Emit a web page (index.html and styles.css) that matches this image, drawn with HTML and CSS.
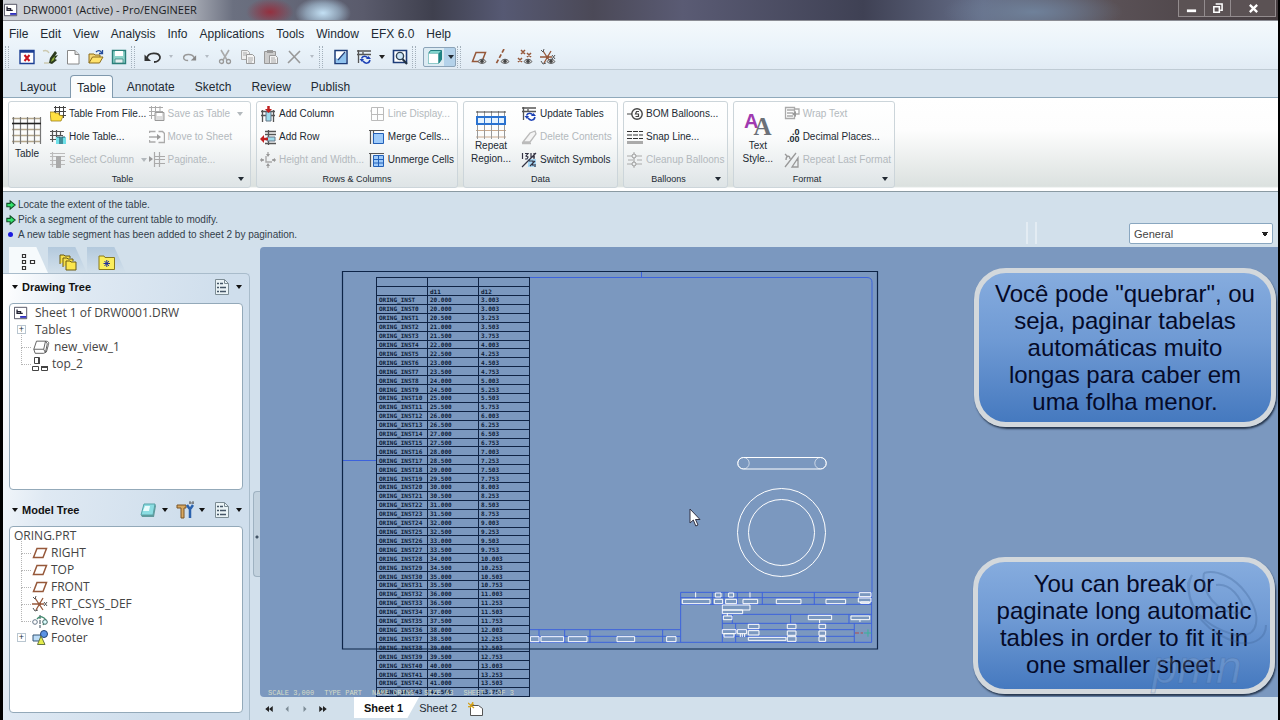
FILE: index.html
```html
<!DOCTYPE html>
<html lang="en">
<head>
<meta charset="utf-8">
<title>DRW0001 (Active) - Pro/ENGINEER</title>
<link rel="stylesheet" href="styles.css">
</head>
<body>
<svg class="defs" aria-hidden="true">
  <defs>
    <symbol id="i-doc" viewBox="0 0 16 16"><path d="M.5 1.500h14v13H.5z" fill="#fff" stroke="#445"/><path d="M3.500 4v4.500h4V6.500H3.500M7.500 8.500H10" fill="none" stroke="#223" stroke-width="1.500"/><path d="M7 12.500h7" stroke="#22b" stroke-width="2"/></symbol>
    <symbol id="i-closewin" viewBox="0 0 16 16"><path d="M1 1.500h14v13H1z" fill="#fff" stroke="#1c3f94" stroke-width="1.400"/><path d="M1 2.500h14" stroke="#1c3f94" stroke-width="2.500"/><path d="M5.500 6l5 6M10.500 6l-5 6" stroke="#c8141e" stroke-width="2"/></symbol>
    <symbol id="i-erase" viewBox="0 0 16 16"><path d="M1 2c3-1 5 0 6 2M2 14h5" fill="none" stroke="#ccc9b0" stroke-width="1.500"/><path d="M8 9l5-7 2 2-2 3 3-1-3 4 2 1-5 4-3-1z" fill="#2b3a1e"/><path d="M10 10l3-3-1 4-3 2z" fill="#8fae3a"/></symbol>
    <symbol id="i-new" viewBox="0 0 16 16"><path d="M2.500 1.500h7.500l4 4v9.500H2.500z" fill="#fff" stroke="#888"/><path d="M10 1.500v4h4" fill="#ddd" stroke="#888"/></symbol>
    <symbol id="i-open" viewBox="0 0 16 16"><path d="M1 14V5h5l1 1h5v3" fill="#f4d676" stroke="#8c6d1c"/><path d="M1 14l3.500-6H15l-3.500 6z" fill="#ffe26b" stroke="#8c6d1c"/><path d="M8 3c2-2 4-2 6 1M14.500 1v3.500H11" fill="none" stroke="#234a9c" stroke-width="1.300"/></symbol>
    <symbol id="i-save" viewBox="0 0 16 16"><path d="M1.500 1.500h13v13h-13z" fill="#8ed2ca" stroke="#2b7f7a" stroke-width="1.400"/><path d="M4 2h8v5H4z" fill="#fff"/><path d="M4 10h8v4H4z" fill="#e5efef" stroke="#2b7f7a" stroke-width=".7"/></symbol>
    <symbol id="i-undo" viewBox="0 0 18 16"><path d="M3 9C4 3 15 3 16 8c.5 3-3 5-6 5" fill="none" stroke="#333" stroke-width="1.800"/><path d="M.5 5.500V12H7z" fill="#333"/></symbol>
    <symbol id="i-redo" viewBox="0 0 18 16"><path d="M15 9C13 4 4 4 3 8c-.5 3 2 4 5 4" fill="none" stroke="#999" stroke-width="1.600"/><path d="M17 6v6h-6z" fill="#888"/></symbol>
    <symbol id="i-cut" viewBox="0 0 16 16"><path d="M4 1l6 10M12 1L6 11" stroke="#aaa" stroke-width="1.600"/><circle cx="4.500" cy="12.500" r="2" fill="none" stroke="#999" stroke-width="1.300"/><circle cx="11.500" cy="12.500" r="2" fill="none" stroke="#999" stroke-width="1.300"/></symbol>
    <symbol id="i-copy" viewBox="0 0 16 16"><path d="M1.500 1.500h6l2 2v7h-8z" fill="#eee" stroke="#aaa"/><path d="M6.500 5.500h6l2 2v7h-8z" fill="#f3f3f3" stroke="#999"/><path d="M3 4h4M3 6h3M8 9h5M8 11h5M8 13h4" stroke="#aaa"/></symbol>
    <symbol id="i-paste" viewBox="0 0 16 16"><path d="M1.500 2.500h11v12h-11z" fill="#ccc" stroke="#999"/><path d="M4 1h6v3H4z" fill="#999"/><path d="M6.500 6.500h6l2 2v6h-8z" fill="#f3f3f3" stroke="#999"/><path d="M8 9h4M8 11h5M8 13h5" stroke="#aaa"/></symbol>
    <symbol id="i-x" viewBox="0 0 16 16"><path d="M3 2l11 12M14 2L2 14" stroke="#999" stroke-width="1.600"/></symbol>
    <symbol id="i-sheet" viewBox="0 0 16 16"><path d="M2 1.500h12v13H2z" fill="#fff" stroke="#1d3c78" stroke-width="1.500"/><path d="M3 14V9c3 3 5-1 10-6v11z" fill="#8fc2ee"/><path d="M5 11l7-8" stroke="#1d3c78" stroke-width="1.200"/></symbol>
    <symbol id="i-update" viewBox="0 0 16 16"><path d="M1 2h14M1 5.500h14M2.500 1v13M7 3v3" fill="none" stroke="#555" stroke-width="1.300"/><path d="M5.500 9.500c1-3 5-3 6.500 0M14 11c-1 4-5 4-7 1" fill="none" stroke="#1a3fb5" stroke-width="1.500"/><path d="M10 10h5l-2.500-3zM3.500 10h4.500L6 13z" fill="#1a3fb5"/></symbol>
    <symbol id="i-zoom" viewBox="0 0 16 16"><path d="M1.500 1.500h13v12h-13z" fill="#fff" stroke="#1d3c78" stroke-width="1.600"/><circle cx="8" cy="7" r="3.600" fill="#cfe8fa" stroke="#345" stroke-width="1.400"/><path d="M10.500 10l4.500 5" stroke="#234" stroke-width="2"/></symbol>
    <symbol id="i-cube" viewBox="0 0 16 16"><path d="M1.500 4.500l2-3h11v9l-3 4h-10z" fill="#7fd3cc" stroke="#247f80"/><path d="M1.500 4.500h10v10h-10z" fill="#fff" stroke="#8fc9c9"/><path d="M11.500 4.500l3-3v9l-3 4z" fill="#1f8484"/></symbol>
    <symbol id="i-plane" viewBox="0 0 16 16"><path d="M5 3.500h9.500L11 12.500H1.500z" fill="none" stroke="#96583a" stroke-width="1.500"/></symbol>
    <symbol id="i-eye" viewBox="0 0 16 16"><path d="M7 12.500c2-3 6-3 8 0-2 2.500-6 2.500-8 0z" fill="#ddd" stroke="#555"/><circle cx="11" cy="12.300" r="1.700" fill="#444"/></symbol>
    <symbol id="i-axis" viewBox="0 0 16 16"><path d="M10 0L2 15" stroke="#96583a" stroke-width="1.700" stroke-dasharray="4 2"/></symbol>
    <symbol id="i-points" viewBox="0 0 16 16"><path d="M4 1l4 4M8 1L4 5M10 4l4 4M14 4l-4 4M1 9l4 4M5 9l-4 4" stroke="#96583a" stroke-width="1.500"/></symbol>
    <symbol id="i-csys" viewBox="0 0 16 16"><path d="M0 8h12M3 2l8 12M11 2L4 14" stroke="#96583a" stroke-width="1.300"/><path d="M12 6l3 4M15 6l-3 4M1 1l2 2 1-3M1 12l2 3 3-1" fill="none" stroke="#555"/><circle cx="7.500" cy="8" r="1.600" fill="#96583a"/></symbol>
    <symbol id="i-grid" viewBox="0 0 30 28"><path d="M0 1.500h29M0 12.500h29M0 18.500h29M0 24.500h29" stroke="#b3a68c" stroke-width="1.300"/><path d="M1.500 0v27M8.500 0v27M15.500 0v27M22.500 0v27M28.500 0v27" stroke="#777" stroke-width="1.200"/><path d="M0 6.500h29" stroke="#222" stroke-width="1.600"/></symbol>
    <symbol id="i-tfile" viewBox="0 0 16 16"><path d="M4 1.500h12M4 5.500h12M4 9.500h12M5.500 0v12M9.500 0v12M13.500 0v12" stroke="#444"/><path d="M0 6h4l1 1h4v2l4 1-2 5H1z" fill="#ffe040" stroke="#9c821c" stroke-width=".8"/></symbol>
    <symbol id="i-thole" viewBox="0 0 16 16"><path d="M0 2.500h14M0 6.500h13M0 10.500h7M2.500 1v12M6.500 1v10M10.500 2v4" stroke="#555" stroke-width="1.200"/><path d="M6 8h10v7H6z" fill="#6fe0e8"/><path d="M7 8h3v7M15 8h-3v7" fill="none" stroke="#256" stroke-width="1.200"/></symbol>
    <symbol id="i-tcol" viewBox="0 0 16 16"><path d="M0 1.500h15M0 4.500h15M0 8.500h15M0 12.500h15M2.500 0v15" stroke="#bbb" stroke-width="1.200"/><path d="M6 4h5v12H6z" fill="#aaa"/></symbol>
    <symbol id="i-tsave" viewBox="0 0 16 16"><path d="M0 1.500h14M0 5.500h14M0 9.500h6M2.500 0v13M6.500 0v6M11 0v6" stroke="#aaa"/><path d="M6 6.500h9v8H6z" fill="#ddd" stroke="#999"/><path d="M8 7h5v3H8z" fill="#fff"/></symbol>
    <symbol id="i-move" viewBox="0 0 16 16"><path d="M.5 4v-1.500h6M.5 11v2h6M9.500 2.500h4l2 2v9h-6M0 8h10" fill="none" stroke="#aaa" stroke-width="1.400"/><path d="M8 5l4 3-4 3z" fill="#999"/></symbol>
    <symbol id="i-pag" viewBox="0 0 16 16"><path d="M5.500 0v15M10.500 0v15M5 4.500h11M5 7.500h11M5 11.500h11" stroke="#aaa" stroke-width="1.200"/><path d="M0 4l4 3-4 3z" fill="#999"/></symbol>
    <symbol id="i-acol" viewBox="0 0 16 16"><path d="M1 5.500h14M1 9.500h14M2.500 4v12M13.500 4v12" stroke="#555" stroke-width="1.300"/><path d="M6 6h5v9H6z" fill="#9fdcec" stroke="#678"/><path d="M8.500 0v6" stroke="#c02020" stroke-width="2.500"/><path d="M5 3h7L8.500 7z" fill="#c02020"/></symbol>
    <symbol id="i-arow" viewBox="0 0 16 16"><path d="M5 2.500h11M5 5.500h11M5 14.500h11M8.500 1v15" stroke="#555" stroke-width="1.300"/><path d="M7 8h8v4H7z" fill="#9fdcec" stroke="#678"/><path d="M2 10h6" stroke="#c02020" stroke-width="2.500"/><path d="M4 6v8L0 10z" fill="#c02020"/></symbol>
    <symbol id="i-hw" viewBox="0 0 16 16"><path d="M6 4v6h6M0 8h4M12 8h4M8 0v4M8 12v4" fill="none" stroke="#aaa" stroke-width="1.400"/><path d="M1 6v4l3-2zM15 6v4l-3-2zM6 2h4L8 5zM6 14h4l-2-3z" fill="#999"/></symbol>
    <symbol id="i-line" viewBox="0 0 16 16"><path d="M2.500 1.500h12v13h-12zM8.500 2v12M2 8.500h12M1 5h2" fill="none" stroke="#bbb"/></symbol>
    <symbol id="i-merge" viewBox="0 0 16 16"><path d="M0 1.500h15M1.500 1v14M4.500 1v14" stroke="#555" stroke-width="1.200"/><path d="M4.500 4.500h10v10h-10z" fill="#9fcbfa" stroke="#2260b8"/></symbol>
    <symbol id="i-unmerge" viewBox="0 0 16 16"><path d="M0 1.500h15M1.500 1v14" stroke="#555" stroke-width="1.200"/><path d="M4.500 3.500h10v11h-10z" fill="#9fcbfa" stroke="#2260b8"/><path d="M9.500 4v10M5 7.500h10M5 11h10" stroke="#2260b8"/></symbol>
    <symbol id="i-repeat" viewBox="0 0 30 28"><path d="M0 19.500h30M0 26h30" stroke="#c9a98c"/><path d="M1.500 0v28M8.500 0v28M15.500 0v28M22.500 0v28M28.500 0v28" stroke="#999"/><path d="M0 1h30" stroke="#444"/><path d="M1 6h28v7H1z" fill="#e5f3ff" stroke="#2a72d0" stroke-width="2"/><path d="M8.500 6v7M15.500 6v7M22.500 6v7" stroke="#2a72d0"/></symbol>
    <symbol id="i-eraser" viewBox="0 0 16 16"><path d="M2 13l7-9 5-2 1 3-6 8zM1 14.500h9" fill="#f4f4f4" stroke="#bbb" stroke-width="1.300"/></symbol>
    <symbol id="i-switch" viewBox="0 0 16 16"><path d="M7 7h8v8H7z" fill="#a8d8f6"/><path d="M1.500 1v6M4 1.500h3L5 4l2 1-1 2H4M10 1v4h4M13 1v6M1 15L15 1M8 9h4v5M9 14l5-5M14 12v3" fill="none" stroke="#334" stroke-width="1.200"/></symbol>
    <symbol id="i-bom" viewBox="0 0 16 16"><circle cx="10" cy="8" r="5.200" fill="none" stroke="#444" stroke-width="1.400"/><path d="M0 8h5M12 5.500H9.500L8.500 8h3v2.500H8.500" fill="none" stroke="#444" stroke-width="1.200"/></symbol>
    <symbol id="i-snap" viewBox="0 0 16 16"><path d="M0 2.500h16M0 6h16M0 9.500h16" stroke="#333" stroke-width="1.200" stroke-dasharray="5 1"/><path d="M0 13.500h16" stroke="#aaa" stroke-width="3"/></symbol>
    <symbol id="i-clean" viewBox="0 0 16 16"><path d="M0 4h5M9 4h6M0 12h5M9 12h6M1 8h5M10 8h5M7 0v2M7 14v2" stroke="#aaa"/><circle cx="7" cy="4" r="2" fill="none" stroke="#999"/><circle cx="7" cy="12" r="2" fill="none" stroke="#999"/><path d="M7 6v4" stroke="#999"/></symbol>
    <symbol id="i-wrap" viewBox="0 0 16 16"><path d="M1.500 1.500h9v11h-9zM3 4h8M3 7h6M3 10h6M11 3h4v5h-4" fill="none" stroke="#aaa" stroke-width="1.300"/><path d="M12 5v6L8 8z" fill="#999"/></symbol>
    <symbol id="i-repfmt" viewBox="0 0 16 16"><path d="M1 15L12 1M1 2l3 3M2 8c0-5 4-5 4-1M8 15l6-9v9z" fill="none" stroke="#999" stroke-width="1.300"/></symbol>
    <symbol id="i-arrow" viewBox="0 0 12 12"><path d="M1 4h4V1l6 5-6 5V8H1z" fill="#31e36c" stroke="#124d28" stroke-width="1.300"/></symbol>
    <symbol id="i-nodes" viewBox="0 0 16 18"><path d="M2.500 1.500h3v3h-3zM2.500 7.500h3v3h-3zM2.500 13.500h3v3h-3zM10.500 7.500h4v3h-4z" fill="#fff" stroke="#333" stroke-width="1.200"/></symbol>
    <symbol id="i-folders" viewBox="0 0 18 18"><path d="M1 11V2h4l1 1h5v2" fill="#f7e04c" stroke="#6b5a12"/><path d="M4 14V5h4l1 1h5v2" fill="#f7e04c" stroke="#6b5a12"/><path d="M7 8h4l1 1h5v8H7z" fill="#fbe64e" stroke="#6b5a12"/></symbol>
    <symbol id="i-fav" viewBox="0 0 18 16"><path d="M1 2h5l1 1.500h9.500v12H1z" fill="#fbee5c" stroke="#8a7a1c"/><path d="M8.800 6v7M5.500 9.500h6.500M6.500 7l4.500 5M11 7l-4.500 5" stroke="#22309c"/></symbol>
    <symbol id="i-list" viewBox="0 0 16 18"><path d="M1.500 1.500h9l4 4v11h-13z" fill="#eaf3f6" stroke="#7c8c94"/><path d="M10.500 1.500v4h4" fill="none" stroke="#7c8c94"/><path d="M3 5.500h2M3 9.500h2M3 13.500h2M6 5.500h3M6 9.500h6M6 13.500h6" stroke="#456" stroke-width="1.500"/></symbol>
    <symbol id="i-layer" viewBox="0 0 18 16"><path d="M5 2h11l-2 11H2z" fill="#8cdde2" stroke="#56a3a8"/><path d="M16 2l1 2-2 11-1-2zM2 13l1 2h12l-1-2z" fill="#5f9a9c"/><path d="M6 4h5l-1 5H4z" fill="#e8fbfc"/></symbol>
    <symbol id="i-tools" viewBox="0 0 18 18"><path d="M1 4h9v3H8v10H5V7H1z" fill="#d8a860" stroke="#7b5526"/><path d="M11 4l2 3h2l2-3M14 7v10" fill="none" stroke="#2b62ae" stroke-width="2.500"/><path d="M13 2h5M14 0v3M17 0v3" stroke="#666"/></symbol>
    <symbol id="i-view" viewBox="0 0 20 16"><path d="M5 1.500h10l-2 9H2l3-9M15 1.500c4 0 4 2 3 5l-2 7-3 1.500H3.500L2 10.500M13 10.500l2 4M15 1.500l2 3-2 9" fill="#fff" stroke="#555"/></symbol>
    <symbol id="i-proj" viewBox="0 0 16 16"><path d="M2.500 1.500h5v6h-5zM.5 10.500h6v4h-6zM9.500 10.500h6v4h-6z" fill="#fff" stroke="#444"/><path d="M9 11h7M7 2v6" stroke="#444" stroke-width="2"/></symbol>
    <symbol id="i-rev" viewBox="0 0 16 16"><circle cx="3" cy="9" r="2.300" fill="none" stroke="#678"/><path d="M8 2v13" stroke="#345" stroke-dasharray="4 1"/><path d="M5 6c3-4 7-2 9 1l-3 5" fill="none" stroke="#3e8a6c" stroke-width="1.300"/><circle cx="13" cy="9" r="2.300" fill="#dff" stroke="#466"/></symbol>
    <symbol id="i-footer" viewBox="0 0 16 16"><path d="M1 5h8v6H1z" fill="#bcdcf7" stroke="#357"/><circle cx="12" cy="4" r="3.500" fill="#5b93e4" stroke="#247"/><path d="M9 6l4 8.500H5.500z" fill="#e4ec4c" stroke="#674"/></symbol>
    <symbol id="i-newsheet" viewBox="0 0 16 14"><path d="M2.500 3.500h8l4 3v7h-12z" fill="#fff" stroke="#555"/><path d="M0 1l6 5M5 0L2 6M0 5l6-3" stroke="#d3a018" stroke-width="1.300"/></symbol>
  </defs>
</svg>

<div class="app">
  <header class="titlebar">
    <svg class="ic"><use href="#i-doc"/></svg>
    <h1 class="title">DRW0001 (Active) - Pro/ENGINEER</h1>
    <div class="winbtns">
      <button type="button" class="winbtn" aria-label="Minimize"><svg viewBox="0 0 12 12"><path d="M1 8.500h10" stroke="#fff" stroke-width="3"/></svg></button>
      <button type="button" class="winbtn" aria-label="Restore"><svg viewBox="0 0 12 12"><path d="M4 1h7v7H9M2 4h6v6H2z" fill="none" stroke="#fff" stroke-width="1.700"/></svg></button>
      <button type="button" class="winbtn close" aria-label="Close"><svg viewBox="0 0 12 12"><path d="M2 2l8 8M10 2l-8 8" stroke="#fff" stroke-width="2.500"/></svg></button>
    </div>
  </header>

  <div class="bars">
    <nav class="menubar">
      <button type="button">File</button><button type="button">Edit</button><button type="button">View</button><button type="button">Analysis</button><button type="button">Info</button><button type="button">Applications</button><button type="button">Tools</button><button type="button">Window</button><button type="button">EFX 6.0</button><button type="button">Help</button>
    </nav>
    <div class="toolbar">
      <span class="grip"></span>
      <button type="button" class="tool" aria-label="Close window"><svg class="ic"><use href="#i-closewin"/></svg></button>
      <button type="button" class="tool" aria-label="Erase"><svg class="ic"><use href="#i-erase"/></svg></button>
      <button type="button" class="tool" aria-label="New"><svg class="ic"><use href="#i-new"/></svg></button>
      <button type="button" class="tool" aria-label="Open"><svg class="ic"><use href="#i-open"/></svg></button>
      <button type="button" class="tool" aria-label="Save"><svg class="ic"><use href="#i-save"/></svg></button>
      <span class="grip"></span>
      <button type="button" class="tool" aria-label="Undo"><svg class="ic wide"><use href="#i-undo"/></svg></button>
      <button type="button" class="drop dim" aria-label="Undo list"></button>
      <button type="button" class="tool" aria-label="Redo"><svg class="ic"><use href="#i-redo"/></svg></button>
      <button type="button" class="drop dim" aria-label="Redo list"></button>
      <button type="button" class="tool" aria-label="Cut"><svg class="ic"><use href="#i-cut"/></svg></button>
      <button type="button" class="tool" aria-label="Copy"><svg class="ic"><use href="#i-copy"/></svg></button>
      <button type="button" class="tool" aria-label="Paste"><svg class="ic"><use href="#i-paste"/></svg></button>
      <button type="button" class="tool" aria-label="Delete"><svg class="ic"><use href="#i-x"/></svg></button>
      <button type="button" class="drop dim" aria-label="Delete options"></button>
      <span class="grip"></span>
      <button type="button" class="tool" aria-label="Sheet setup"><svg class="ic"><use href="#i-sheet"/></svg></button>
      <button type="button" class="tool" aria-label="Update"><svg class="ic"><use href="#i-update"/></svg></button>
      <button type="button" class="drop" aria-label="Update options"></button>
      <button type="button" class="tool" aria-label="Refit"><svg class="ic"><use href="#i-zoom"/></svg></button>
      <span class="grip"></span>
      <button type="button" class="viewbtn" aria-label="Display style"><svg class="ic"><use href="#i-cube"/></svg><span class="caret"></span></button>
      <span class="grip"></span>
      <button type="button" class="tool" aria-label="Planes"><svg class="ic"><use href="#i-plane"/><use href="#i-eye"/></svg></button>
      <button type="button" class="tool" aria-label="Axes"><svg class="ic"><use href="#i-axis"/><use href="#i-eye"/></svg></button>
      <button type="button" class="tool" aria-label="Points"><svg class="ic"><use href="#i-points"/><use href="#i-eye"/></svg></button>
      <button type="button" class="tool" aria-label="Coordinate systems"><svg class="ic"><use href="#i-csys"/><use href="#i-eye"/></svg></button>
    </div>
  </div>

  <nav class="tabs">
    <button type="button">Layout</button><button type="button" class="active">Table</button><button type="button">Annotate</button><button type="button">Sketch</button><button type="button">Review</button><button type="button">Publish</button>
  </nav>

  <div class="ribbon">
    <section class="group g-table">
      <div class="cmds">
        <button type="button" class="big"><svg class="bigic"><use href="#i-grid"/></svg><span>Table</span></button>
        <div class="col">
          <button type="button"><svg class="ic"><use href="#i-tfile"/></svg>Table From File...</button>
          <button type="button"><svg class="ic"><use href="#i-thole"/></svg>Hole Table...</button>
          <button type="button" disabled><svg class="ic"><use href="#i-tcol"/></svg>Select Column<span class="caret"></span></button>
        </div>
        <div class="col">
          <button type="button" disabled><svg class="ic"><use href="#i-tsave"/></svg>Save as Table<span class="caret"></span></button>
          <button type="button" disabled><svg class="ic"><use href="#i-move"/></svg>Move to Sheet</button>
          <button type="button" disabled><svg class="ic"><use href="#i-pag"/></svg>Paginate...</button>
        </div>
      </div>
      <h2 class="more">Table<span class="caret end"></span></h2>
    </section>
    <section class="group g-rows">
      <div class="cmds">
        <div class="col">
          <button type="button"><svg class="ic"><use href="#i-acol"/></svg>Add Column</button>
          <button type="button"><svg class="ic"><use href="#i-arow"/></svg>Add Row</button>
          <button type="button" disabled><svg class="ic"><use href="#i-hw"/></svg>Height and Width...</button>
        </div>
        <div class="col">
          <button type="button" disabled><svg class="ic"><use href="#i-line"/></svg>Line Display...</button>
          <button type="button"><svg class="ic"><use href="#i-merge"/></svg>Merge Cells...</button>
          <button type="button"><svg class="ic"><use href="#i-unmerge"/></svg>Unmerge Cells</button>
        </div>
      </div>
      <h2>Rows &amp; Columns</h2>
    </section>
    <section class="group g-data">
      <div class="cmds">
        <button type="button" class="big two"><svg class="bigic"><use href="#i-repeat"/></svg><span>Repeat</span><span>Region...</span></button>
        <div class="col">
          <button type="button"><svg class="ic"><use href="#i-update"/></svg>Update Tables</button>
          <button type="button" disabled><svg class="ic"><use href="#i-eraser"/></svg>Delete Contents</button>
          <button type="button"><svg class="ic"><use href="#i-switch"/></svg>Switch Symbols</button>
        </div>
      </div>
      <h2>Data</h2>
    </section>
    <section class="group g-ball">
      <div class="cmds">
        <div class="col">
          <button type="button"><svg class="ic"><use href="#i-bom"/></svg>BOM Balloons...</button>
          <button type="button"><svg class="ic"><use href="#i-snap"/></svg>Snap Line...</button>
          <button type="button" disabled><svg class="ic"><use href="#i-clean"/></svg>Cleanup Balloons</button>
        </div>
      </div>
      <h2 class="more">Balloons<span class="caret end"></span></h2>
    </section>
    <section class="group g-fmt">
      <div class="cmds">
        <button type="button" class="big two"><span class="aa" aria-hidden="true"><b class="a1">A</b><b class="a2">A</b></span><span>Text</span><span>Style...</span></button>
        <div class="col">
          <button type="button" disabled><svg class="ic"><use href="#i-wrap"/></svg>Wrap Text</button>
          <button type="button"><span class="ic dec" aria-hidden="true"><i>.0</i><i>.00</i></span>Decimal Places...</button>
          <button type="button" disabled><svg class="ic"><use href="#i-repfmt"/></svg>Repeat Last Format</button>
        </div>
      </div>
      <h2 class="more">Format<span class="caret end"></span></h2>
    </section>
  </div>

  <div class="status">
    <ul class="messages">
      <li><svg><use href="#i-arrow"/></svg>Locate the extent of the table.</li>
      <li><svg><use href="#i-arrow"/></svg>Pick a segment of the current table to modify.</li>
      <li><span class="dot"></span>A new table segment has been added to sheet 2 by pagination.</li>
    </ul>
    <span class="split"></span>
    <select class="filter" aria-label="Selection filter"><option>General</option></select>
  </div>

  <main class="work">
    <aside class="side">
      <div class="sidetabs">
        <button type="button" class="on" aria-label="Tree"><svg width="16" height="18"><use href="#i-nodes"/></svg></button>
        <button type="button" aria-label="Folders"><svg width="18" height="18"><use href="#i-folders"/></svg></button>
        <button type="button" aria-label="Favorites"><svg width="18" height="16"><use href="#i-fav"/></svg></button>
      </div>
      <div class="panel">
        <div class="head"><span class="caret"></span><h2>Drawing Tree</h2>
          <button type="button" aria-label="Tree settings"><svg><use href="#i-list"/></svg><span class="caret"></span></button></div>
        <ul class="tree">
          <li class="root"><svg class="ic"><use href="#i-doc"/></svg>Sheet 1 of DRW0001.DRW</li>
          <li><span class="plus">+</span>Tables</li>
          <li class="kid"><svg class="ic wide"><use href="#i-view"/></svg>new_view_1</li>
          <li class="kid last"><svg class="ic"><use href="#i-proj"/></svg>top_2</li>
        </ul>
        <div class="head second"><span class="caret"></span><h2>Model Tree</h2>
          <button type="button" aria-label="Show"><svg><use href="#i-layer"/></svg><span class="caret"></span></button>
          <button type="button" aria-label="Tools"><svg><use href="#i-tools"/></svg><span class="caret"></span></button>
          <button type="button" aria-label="Model tree settings"><svg><use href="#i-list"/></svg><span class="caret"></span></button></div>
        <ul class="tree model">
          <li class="root">ORING.PRT</li>
          <li class="kid"><svg class="ic"><use href="#i-plane"/></svg>RIGHT</li>
          <li class="kid"><svg class="ic"><use href="#i-plane"/></svg>TOP</li>
          <li class="kid"><svg class="ic"><use href="#i-plane"/></svg>FRONT</li>
          <li class="kid"><svg class="ic"><use href="#i-csys"/></svg>PRT_CSYS_DEF</li>
          <li class="kid"><svg class="ic"><use href="#i-rev"/></svg>Revolve 1</li>
          <li class="foot"><span class="plus">+</span><svg class="ic"><use href="#i-footer"/></svg>Footer</li>
        </ul>
      </div>
    </aside>
    <div class="sash"><span></span></div>

    <div class="stage">
      <div class="canvas">
        <svg class="drawing" viewBox="260 247 640 450" width="640" height="450">
          <g fill="none" stroke="#3c62dc">
            <path d="M376.500 642.500V277.500H867q5 0 5 5V592M343 460.500h33M641.500 272v5"/>
            <g transform="translate(520 580) scale(.3333)" stroke-width="3">
              <path d="M30 149h451M30 169h451M30 187h1025M482 187V37h573v150M482 53h573M482 73h573M577 37v36M612 37v36M652 37v36M727 37v36M883 37v36M607 73v114M607 103h448M637 103v27M812 103v27M987 103v27M607 130h448M607 149h396M607 169h396M647 130v57M1003 130v57M57 149v38M134 149v38M210 149v38M428 149v38"/>
              <path stroke="#fff" d="M527 37v15M690 37v15M586 39h17v12h-17zM626 39h15v12h-15zM1018 38h35v12h-35zM487 58h83v13h-83zM583 58h25v13h-25zM617 58h33v13h-33zM669 58h44v13h-44zM769 58h74v13h-74zM918 58h59v13h-59zM1015 54h38v12h-38zM1022 66h26v4h-26zM607 75h83v15h-83zM607 90h61v11h-61zM610 108h26v11h-26zM622 99v9M865 106h70v13h-70zM899 119v10M993 108h56v11h-56zM1020 119v7M685 133h32v13h-32zM802 133h26v13h-26zM897 133h20v13h-20zM607 149h41v12h-41zM612 161h30v10h-30zM652 149h28v12h-28zM661 161v10M667 161v10M674 161v10M685 152h32v13h-32zM802 153h26v13h-26zM897 153h20v13h-20zM685 172h113v9h-113zM802 170h26v14h-26zM897 170h20v14h-20zM31 170h26v15h-26zM63 170h68v15h-68zM145 170h56v15h-56zM291 170h53v15h-53zM440 170h28v15h-28z"/>
              <path stroke="#b34a4a" d="M1005 159h24" stroke-dasharray="12 5"/><path stroke="#39b39a" d="M1032 159h22M1044 148v22"/>
            </g>
          </g>
          <path d="M342.500 271.500h535v377.500h-535z" fill="none" stroke="#0d2447" stroke-width="1.200"/>
          <g fill="none" stroke="#fff">
            <path d="M743.500 457.500h77a5.700 5.700 0 0 1 0 11.500h-77a5.700 5.700 0 0 1 0-11.500z"/>
            <circle cx="743.500" cy="463.200" r="5.700" stroke-opacity=".6"/><circle cx="820.500" cy="463.200" r="5.700" stroke-opacity=".6"/>
            <circle cx="781.500" cy="532.500" r="44"/><circle cx="781.500" cy="532.500" r="33"/>
          </g>
        </svg>
        <table class="family">
          <thead><tr><td></td><td></td><td></td></tr><tr><td></td><th>d11</th><th>d12</th></tr></thead>
          <tbody id="rows"></tbody>
        </table>
        <p class="info"><span>SCALE 3,000</span><span>TYPE PART</span><span>NAME ORING</span><span>SIZE A3</span><span>SHEET 1 OF 3</span></p>
        <svg class="cursor" viewBox="0 0 12 19"><path d="M1 1v14l3.300-3 2.500 6 2.200-1-2.500-5.500H11z" fill="#fff" stroke="#334"/></svg>
        <p class="note top">Você pode "quebrar", ou seja, paginar tabelas automáticas muito longas para caber em uma folha menor.</p>
        <p class="note low">You can break or paginate long automatic tables in order to fit it in one smaller sheet.</p>
        <svg class="mark" viewBox="0 0 130 140" aria-hidden="true">
          <g fill="none" stroke="#3d5f92" stroke-opacity=".3" stroke-width="2">
            <path d="M46 18c-10 20 4 50 44 60 24 4 26-20 10-42C88 20 70 12 58 16M58 16c-4 18 14 42 36 40M70 28c14-2 26 12 28 28M46 18l-4 8c0 28 20 52 52 60 16 2 26-6 26-18"/>
          </g>
          <text x="6" y="126" fill="#b9cbe2" fill-opacity=".2" stroke="#3d5f92" stroke-opacity=".25">pmn</text>
        </svg>
      </div>
      <nav class="sheets">
        <button type="button" class="nav" aria-label="First sheet"><svg width="8" height="6" viewBox="0 0 10 8"><path d="M5 0v8L0 4zM10 0v8L5 4z" fill="#222"/></svg></button>
        <button type="button" class="nav" aria-label="Previous sheet"><svg width="8" height="6" viewBox="0 0 10 8"><path d="M7 0v8L3 4z" fill="#7d8b96"/></svg></button>
        <button type="button" class="nav" aria-label="Next sheet"><svg width="8" height="6" viewBox="0 0 10 8"><path d="M3 0v8l4-4z" fill="#7d8b96"/></svg></button>
        <button type="button" class="nav" aria-label="Last sheet"><svg width="8" height="6" viewBox="0 0 10 8"><path d="M0 0v8l5-4zM5 0v8l5-4z" fill="#222"/></svg></button>
        <button type="button" class="sheet cur">Sheet 1</button>
        <button type="button" class="sheet">Sheet 2</button>
        <button type="button" class="nav" aria-label="New sheet"><svg width="16" height="14"><use href="#i-newsheet"/></svg></button>
      </nav>
    </div>
  </main>
</div>
<script src="script.js"></script>
</body>
</html>
```
FILE: script.js
```js
// Fills the O-ring family table: instance name, inner and section dimensions.
const body = document.getElementById('rows');
for (let i = -1; i <= 43; i++) {
  const step = Math.max(i, 0);
  const row = body.insertRow();
  row.insertCell().textContent = 'ORING_INST' + (i < 0 ? '' : i);
  row.insertCell().textContent = (20 + step * 0.5).toFixed(3);
  row.insertCell().textContent = (3.003 + step * 0.25).toFixed(3);
}
```
FILE: styles.css
```css
* { box-sizing: border-box; }
body { margin: 0; background: #000; font: 10px/14px "Liberation Sans", Arial, sans-serif; color: #222a33; }
button { font: inherit; color: inherit; background: none; border: 0; padding: 0; margin: 0; display: flex; align-items: center; white-space: nowrap; }
h1, h2, p, ul { margin: 0; padding: 0; font-size: inherit; font-weight: normal; list-style: none; }
svg { display: block; flex: none; }
.defs { position: absolute; width: 0; height: 0; }
.ic { width: 16px; height: 16px; flex: none; }
.ic.wide { width: 18px; }
.caret { width: 0; height: 0; border: 3px solid transparent; border-top: 4px solid currentColor; border-bottom: 0; flex: none; }

.app { min-height: 100vh; margin: 0 2px 0 3px; display: flex; flex-direction: column; background: #d2e0ec; }

.titlebar { height: 21px; display: flex; align-items: center; gap: 5px; padding-left: 1px; border-bottom: 1px solid #8b8d94;
  background:
    radial-gradient(24px 14px at 267px 12px, #94303f, transparent),
    radial-gradient(28px 16px at 320px 13px, #c3e0f4, #a9c6dc99 60%, transparent),
    radial-gradient(90px 24px at 1030px 12px, #6f819a, transparent),
    linear-gradient(90deg, #cfd2d8 0, #c4c8cf 110px, #a4a8b2 190px, #6b7080 230px, #5a5b6c 360px, #3f404e 430px, #565973 500px, #4b4957 590px, #5a5b74 680px, #3f4154 860px, #656e88 980px, #5a5156 1110px, #453d40 100%); }
.titlebar .ic { width: 14px; height: 14px; }
.title { font: 11px/16px "Open Sans", "Noto Sans", sans-serif; color: #1b1d24; }
.winbtns { margin-left: auto; display: flex; align-self: flex-start; margin-right: 2px; border: 1px solid #938c8e; border-top: 0; }
.winbtn { width: 26px; height: 16px; justify-content: center; background: #5b5254; border-right: 1px solid #938c8e; }
.winbtn.close { width: 44px; border-right: 0; }
.winbtn svg { width: 11px; height: 11px; }

.bars { background: linear-gradient(#f4f9fc, #eaf3fa 55%, #e1ebf4); border-bottom: 1px solid #bfcbd4; height: 49px; }
.menubar { display: flex; gap: 12px; height: 23px; padding: 5px 6px 0; font-size: 12px; line-height: 16px; }
.menubar button { height: 16px; }
.toolbar { display: flex; gap: 1px; align-items: center; height: 24px; padding: 1px 2px 0; }
.grip { width: 4px; height: 22px; margin-right: 6px; flex: none; border: dotted #a3b0bb; border-width: 0 1px; }
.tool { width: 22px; height: 22px; justify-content: center; flex: none; }
.drop { width: 12px; height: 22px; justify-content: center; flex: none; }
.drop::after { content: ""; border: 3px solid transparent; border-top: 4px solid #222; border-bottom: 0; }
.drop.dim::after { border-width: 2px; border-top: 3px solid #b4bcc4; border-bottom: 0; }
.viewbtn { width: 33px; height: 20px; padding: 0 3px; gap: 5px; border: 1px solid #8ba3b8; border-radius: 2px; background: linear-gradient(90deg, #dcebf3 0 20px, #b4d2ea 20px); }

.tabs { height: 28px; padding: 5px 7px 0; display: flex; background: #dae6f0; border-bottom: 1px solid #8fa9bb; font-size: 12px; }
.tabs button { padding: 0 10px; height: 23px; }
.tabs .active { border: 1px solid #8099ad; border-bottom: 0; border-radius: 4px 4px 0 0; background: #fafcfd; height: 24px; padding: 0 6px; margin: 0 4px; }

.ribbon { height: 94px; display: flex; gap: 5px; padding: 3px 5px; background: linear-gradient(#fff, #fdfdfd 35%, #dbe1df 95%, #fff 97%); border-bottom: 1px solid #8a9aa2; }
.group { border: 1px solid #ccd5da; border-radius: 3px; height: 87px; padding: 0 3px; display: flex; flex-direction: column; justify-content: space-between; background: linear-gradient(#fff, #fbfcfc 40%, #dee4e6); }
.group h2 { font-size: 9px; line-height: 16px; text-align: center; position: relative; }
.group .more { padding-right: 14px; }
.caret.end { position: absolute; right: 3px; top: 6px; }
.cmds { display: flex; }
.col { display: grid; grid-auto-rows: 23px; align-content: start; }
.col button { gap: 3px; }
.col button:disabled { color: #b3b9bd; }
.col .caret { margin-left: 4px; }
.g-table { width: 243px; }
.g-table .big { width: 30px; margin-right: 8px; }
.g-table .col { width: 103px; }
.g-rows { width: 202px; }
.g-rows .col:first-child { width: 111px; }
.g-data { width: 155px; }
.g-data .big { width: 48px; margin-right: 6px; }
.g-ball { width: 105px; }
.g-fmt { width: 162px; }
.g-fmt .big { width: 42px; margin-right: 5px; }
.big { flex-direction: column; justify-content: flex-start; padding-top: 15px; gap: 2px; line-height: 13px; }
.big.two { padding-top: 9px; gap: 0; }
.bigic { width: 30px; height: 28px; }
.aa { display: flex; align-items: flex-end; height: 28px; }
.a1 { color: #a03ab0; font-size: 20px; line-height: 28px; align-self: flex-start; margin: -4px -5px 0 0; }
.a2 { color: #6c7178; font: bold 25px/24px "Liberation Serif", serif; }
.dec { display: flex; flex-direction: column; align-items: flex-end; font: bold 9px/7px "Liberation Sans", Arial, sans-serif; }
.dec i { font-style: normal; }

.status { height: 55px; display: flex; align-items: flex-end; padding: 0 5px 3px 3px; background: #d2e0eb; }
.messages { flex: 1; align-self: flex-start; padding-top: 5px; color: #333e4a; }
.messages li { height: 15px; display: flex; align-items: center; gap: 2px; }
.messages svg { width: 10px; height: 12px; }
.dot { width: 5px; height: 5px; margin: 0 3px 0 2px; border-radius: 50%; background: #1a1ae0; }
.split { width: 11px; height: 22px; border: solid #e3ecf3; border-width: 0 2px; margin-right: 92px; }
.filter { width: 144px; height: 21px; border: 1px solid #8aa7c0; background: #fff; font: 11px "Liberation Sans", Arial, sans-serif; color: #444; border-radius: 2px; padding: 0 4px; appearance: none;
  background-image: linear-gradient(#222, #222), linear-gradient(#222, #222), linear-gradient(#222, #222); background-size: 6px 1px, 4px 2px, 2px 1px; background-position: right 4px top 8px, right 5px top 9px, right 6px top 11px; background-repeat: no-repeat; }

.work { flex: 1; display: flex; }
.side { width: 247px; display: flex; flex-direction: column; background: linear-gradient(90deg, #e8f0f6, #cddceb); }
.sidetabs { display: flex; height: 26px; padding-left: 6px; background: #d2e0eb; }
.sidetabs button { width: 39px; padding: 3px 0 0 11px; background: linear-gradient(#b3c9dd, #d2e0eb); clip-path: polygon(0 0, 70% 0, 100% 100%, 0 100%); }
.sidetabs .on { background: #f6fafc; }
.panel { flex: 1; display: flex; flex-direction: column; padding: 0 6px 7px; border: 1px solid #a9bccb; border-left: 0; border-bottom: 0; border-radius: 0 5px 0 0; background: linear-gradient(100deg, #fff, #dfe9f3 25%, #cfdeec 70%); }
.head { height: 29px; display: flex; align-items: center; gap: 7px; padding: 0 0 3px 3px; }
.head.second { height: 36px; padding: 3px 0 0 3px; }
.head h2 { font-size: 11px; font-weight: bold; color: #111; flex: 1; margin-left: -3px; }
.head button { gap: 5px; width: 30px; }
.head svg { width: 18px; height: 18px; }
.head .caret { color: #111; }
.tree { flex: 1 1 0; border: 1px solid #93a9b9; border-radius: 4px; background: #fff; padding: 0 4px; font: 12px/17px "Open Sans", "Noto Sans", sans-serif; color: #444; }
.tree li { height: 17px; display: flex; align-items: center; gap: 4px; }
.tree.model li { gap: 3px; }
.tree .root .ic { width: 14px; height: 14px; margin-right: 3px; }
.tree .kid { position: relative; padding-left: 18px; }
.tree .kid::before { content: ""; position: absolute; left: 7px; top: -8px; width: 9px; height: 17px; border: dotted #b5b5b5; border-width: 0 0 1px 1px; }
.plus { width: 9px; height: 9px; margin: 0 5px 0 3px; border: 1px solid #b9c6d0; color: #234; font: 9px/7px "Liberation Sans", Arial, sans-serif; text-align: center; }
.foot .plus { margin-right: 3px; }

.sash { width: 10px; display: flex; flex-direction: column; justify-content: center; align-items: flex-end; padding-top: 100px; }
.sash span { width: 7px; height: 86px; border: 1px solid #9fb2c1; border-right: 0; border-radius: 4px 0 0 4px; background: radial-gradient(circle at 3px 45px, #456 1px, #c3d2de 2px); }

.stage { flex: 1; display: flex; flex-direction: column; min-width: 0; }
.canvas { flex: 1; position: relative; overflow: hidden; background: #7b98bf; border-radius: 4px 0 0 4px; }
.drawing { position: absolute; left: 0; top: 0; }
.family { position: absolute; left: 116px; top: 30px; width: 154px; height: 420px; table-layout: fixed; border-collapse: collapse; font: bold 6px/7px "DejaVu Sans Mono", monospace; color: #0d1c38; }
.family td, .family th { border: 1px solid #0f2344; padding: 0 0 0 2px; text-align: left; height: 8px; font-weight: bold; white-space: nowrap; }
.family thead td { height: 9px; }
.info { position: absolute; left: 8px; bottom: 0; display: flex; gap: 10px; font: 7px/8px "Liberation Mono", monospace; color: #d5dcc8; white-space: nowrap; }
.cursor { position: absolute; left: 429px; top: 261px; width: 12px; height: 19px; }
.note { position: absolute; width: 302px; padding: 7px 14px; border: 5px solid #d3d8dc; border-radius: 32px; background: linear-gradient(#86acde, #6f9ad4 45%, #4579bf); box-shadow: 1px 2px 2px #26364d; color: #050a28; font-size: 24px; line-height: 27px; text-align: center; }
.note.top { right: 2px; top: 21px; }
.note.low { right: 3px; bottom: 3px; padding: 8px 14px 11px; }
.mark { position: absolute; right: 2px; bottom: 0; width: 130px; height: 140px; overflow: visible; }
.mark text { font: italic 46px "Liberation Sans", Arial, sans-serif; }

.sheets { height: 23px; display: flex; align-items: center; font-size: 11px; background: #d2e0eb; }
.nav { width: 18px; height: 20px; justify-content: center; }
.sheet { height: 21px; align-self: flex-start; padding: 0 10px; }
.sheet.cur { margin-left: 22px; padding: 0 16px 0 10px; font-weight: bold; background: #fff; color: #111; clip-path: polygon(0 0, 100% 0, 82% 100%, 0 100%); }
.sheets .sheet + .sheet { padding-left: 0; }
```
